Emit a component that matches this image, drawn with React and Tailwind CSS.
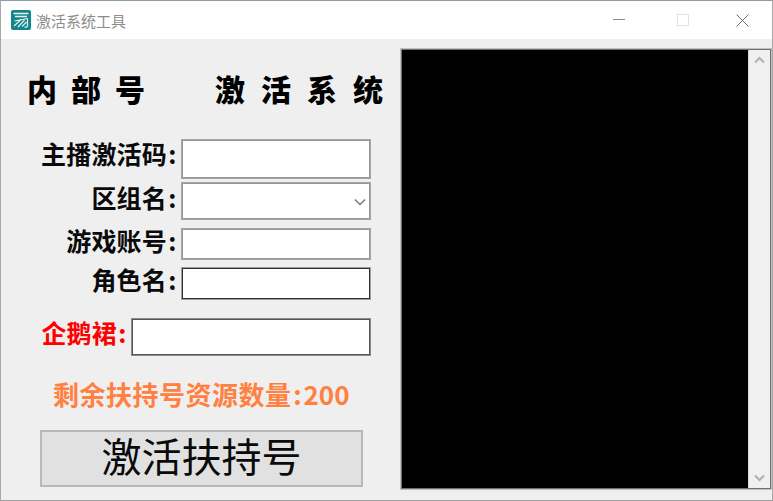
const cjk = { fontFamily: '"Noto Sans CJK SC", "Noto Sans", sans-serif' };

function Logo() {
  return (
    <svg width="20" height="20" viewBox="0 0 20 20" className="shrink-0">
      <rect x="0" y="0" width="20" height="20" rx="2" fill="#14868a" />
      <path d="M2.5 3.5H17.5M4 6.5H16" stroke="#e6f3f1" strokeWidth="1.3" fill="none" />
      <path d="M3.5 11L16.5 8.5M16.5 8.5V15.5C16.5 17 15.5 17.3 13.5 17.2M3 16L10 9.5M7 17L13.5 10M11 16.5L15.5 12" stroke="#dff0ee" strokeWidth="1.2" fill="none" />
    </svg>
  );
}

function Field({ label, h, mt, w = "w-[190px]", box = "border-[#a6a6a6] shadow-[inset_0_0_0_1px_#979797]", lift = "pb-[8px]", red, arrow }) {
  return (
    <div className={`flex items-center justify-end gap-[3px] ${h} ${mt}`}>
      <span className={`${lift} text-[25px] tracking-[0.2px] font-bold leading-none whitespace-nowrap ${red ? "text-[#ff0000]" : "text-[#0a0a0a]"}`}>
        {label}<span className="inline-block w-[11px] text-center">:</span>
      </span>
      <div className={`relative ${w} h-full bg-white border ${box}`}>
        {arrow && (
          <svg width="12" height="8" viewBox="0 0 12 8" className="absolute right-[4px] top-[15px]">
            <path d="M1 1.5L6 6.5L11 1.5" stroke="#707070" strokeWidth="1.3" fill="none" />
          </svg>
        )}
      </div>
    </div>
  );
}

export default function App() {
  return (
    <div className="w-[773px] h-[501px] overflow-hidden flex flex-col bg-[#efefef] border-t border-t-[#8b9cab] border-x border-x-[#a8a8a8] border-b border-b-[#a0a0a0]" style={cjk}>
      <div className="h-[38px] bg-white flex items-center shrink-0 pl-[10px] relative">
        <Logo />
        <span className="ml-[5px] text-[15px] leading-none text-[#8c8c8c]">激活系统工具</span>
        <div className="ml-auto flex items-center">
          <svg width="12" height="2" viewBox="0 0 12 2" className="mr-[52px]"><rect width="12" height="1" fill="#8a8a8a" /></svg>
          <svg width="12" height="12" viewBox="0 0 12 12" className="mr-[47px]"><rect x="0.5" y="0.5" width="11" height="11" fill="none" stroke="#e3e3e3" /></svg>
          <svg width="13" height="13" viewBox="0 0 13 13" className="mr-[23px]"><path d="M0.5 0.5L12.5 12.5M12.5 0.5L0.5 12.5" stroke="#707070" fill="none" /></svg>
        </div>
      </div>
      <div className="flex flex-1 min-h-0">
        <div className="w-[400px] shrink-0 flex flex-col">
          <div className="h-[100px] flex items-center pb-[2px] pl-[26px] text-[30px] font-black leading-none text-black whitespace-nowrap">
            <span className="tracking-[14px]">内部号</span>
            <span className="ml-[56px] tracking-[16px]">激活系统</span>
          </div>
          <div className="w-[370px] flex flex-col">
            <Field label="主播激活码" h="h-[40px]" lift="pb-[11px]" />
            <Field label="区组名" h="h-[38px]" mt="mt-[3px]" arrow />
            <Field label="游戏账号" h="h-[32px]" mt="mt-[8px]" />
            <Field label="角色名" h="h-[33px]" mt="mt-[7px]" lift="pb-[9px]" box="border-[#a0a0a0] shadow-[inset_0_0_0_1px_#2e2e2e]" />
            <Field label="企鹅裙" h="h-[38px]" mt="mt-[18px]" w="w-[240px]" lift="pb-[9px]" box="border-[#8c8c8c] shadow-[inset_0_0_0_1px_#555555]" red />
          </div>
          <div className="mt-[22px] pl-[52px] text-[26px] font-bold leading-[32px] text-[#ff8040] whitespace-nowrap">
            <span className="tracking-[0.5px]">剩余扶持号资源数量</span><span className="inline-block w-[12px] text-center">:</span>200
          </div>
          <button className="mt-[20px] ml-[39px] w-[323px] h-[57px] pb-[8px] bg-[#e1e1e1] border-2 border-[#b8b8b8] text-[40px] leading-none text-[#0a0a0a] font-normal">
            激活扶持号
          </button>
        </div>
        <div className="mt-[10px] mb-[11px] w-[370px] flex border border-[#707070] shadow-[0_0_0_1px_#c0c0c0]">
          <div className="flex-1 bg-black" />
          <div className="w-[22px] flex flex-col items-center justify-between bg-[#f0f0f0] border-l border-[#d8d8d8] py-[6px]">
            <svg width="11" height="8" viewBox="0 0 11 8"><path d="M1 6.5L5.5 2L10 6.5" stroke="#b0b0b0" strokeWidth="2" fill="none" /></svg>
            <svg width="11" height="8" viewBox="0 0 11 8"><path d="M1 1.5L5.5 6L10 1.5" stroke="#b0b0b0" strokeWidth="2" fill="none" /></svg>
          </div>
        </div>
      </div>
    </div>
  );
}
